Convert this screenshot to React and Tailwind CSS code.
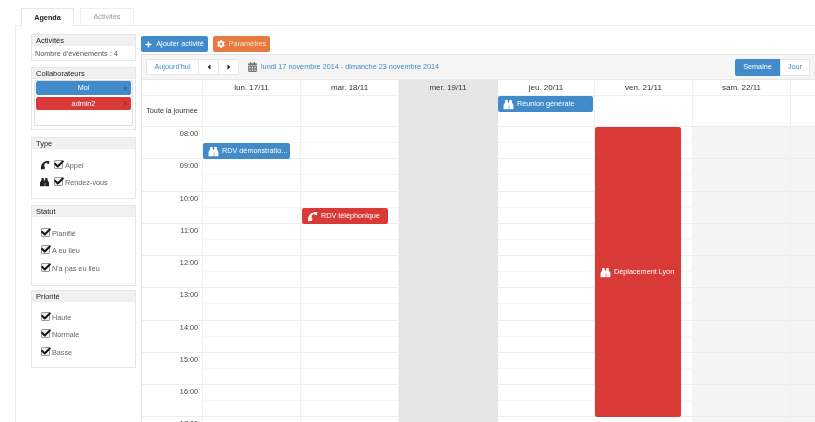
import React from "react";
import { FaPlus, FaCog, FaCalendarAlt, FaTimes, FaCaretLeft, FaCaretRight, FaCheck } from "react-icons/fa";

const Phone = ({ className }) => (
  <svg viewBox="0 0 20 20" className={className} fill="currentColor">
    <path d="M2 18.5C1 11 5 3.500 13 2.200c2.200-.4 4.600-.2 5.800.4l-.6 4.600c-.1.500-.5.700-1 .600l-3.200-1c-.4-.1-.6-.4-.6-.8l.1-1.200c-3.500.7-5.600 4.200-5.300 8l1.200.4c.4.100.600.500.500.900L9 17.800c-.1.500-.5.700-1 .600L2 18.500z" />
  </svg>
);

const Binoculars = ({ className }) => (
  <svg viewBox="0 0 20 20" className={className} fill="currentColor">
    <path d="M4 2h4.500v3H9v2h2V5h.5V2H16v4l3 5v6.500a1 1 0 0 1-1 1h-5.500a1 1 0 0 1-1-1V12h-1v5.500a1 1 0 0 1-1 1H2a1 1 0 0 1-1-1V11l3-5V2z" />
  </svg>
);

const Check = ({ label, icon, wrap }) => (
  <div className={`flex items-center h-[17.300px] ${wrap || ""}`}>
    {icon}
    <span className="relative w-[9px] h-[9px] border border-[#9a9a9a] bg-[#f1f1f1] rounded-[1px] shrink-0">
      <FaCheck className="absolute left-[-1px] top-[-2px] w-[10px] h-[10px] text-[#111]" />
    </span>
    <span className="ml-[2px] text-[#666] mt-[2px]">{label}</span>
  </div>
);

const Card = ({ title, className, children }) => (
  <section className={`border border-[#e6e6e6] ${className || ""}`}>
    <h3 className="h-[11px] leading-[11px] bg-[#f1f1f1] border-b border-[#ececec] pl-[4px] text-[7.500px] text-[#222] font-medium">{title}</h3>
    {children}
  </section>
);

const Event = ({ color, icon, label, className }) => (
  <div className={`absolute z-10 flex items-center rounded-[2px] text-white text-[7.250px] whitespace-nowrap overflow-hidden ${color} ${className}`}>
    {icon === "phone" ? <Phone className="w-[11px] h-[11px] ml-[5px] mr-[3px] shrink-0" /> : <Binoculars className="w-[11px] h-[11px] ml-[5px] mr-[3px] shrink-0" />}
    <span>{label}</span>
  </div>
);

const days = [
  { label: "lun. 17/11", w: "w-[98px]" },
  { label: "mar. 18/11", w: "w-[98px]" },
  { label: "mer. 19/11", w: "w-[99px]", gray: true },
  { label: "jeu. 20/11", w: "w-[97px]" },
  { label: "ven. 21/11", w: "w-[98px]" },
  { label: "sam. 22/11", w: "w-[98px]", off: true },
  { label: "", w: "w-[25px]", off: true },
];
const hours = ["08:00", "09:00", "10:00", "11:00", "12:00", "13:00", "14:00", "15:00", "16:00", "17:00"];

const Column = ({ day, children }) => (
  <div className={`relative shrink-0 border-r ${day.w} ${day.gray ? "bg-[#e6e6e6] border-[#e6e6e6]" : "border-[#f0f0f0]"}`}>
    <div className={`h-[16px] leading-[16px] text-center text-[8px] text-[#333] border-b ${day.gray ? "border-[#e6e6e6]" : "border-[#f0f0f0]"}`}>{day.label}</div>
    <div className={`h-[31px] border-b ${day.gray ? "border-[#e6e6e6]" : "border-[#ededed]"}`} />
    <div className={day.off ? "bg-[#f4f4f4]" : ""}>
      {hours.map((h) => (
        <div key={h} className={`h-[32.250px] border-b ${day.gray ? "border-[#e6e6e6]" : "border-[#ededed]"}`}>
          <div className={`h-[16px] border-b ${day.gray ? "border-[#e6e6e6]" : "border-[#f6f6f6]"}`} />
        </div>
      ))}
    </div>
    {children}
  </div>
);

export default function App() {
  return (
    <div className="relative h-[422px] w-[815px] overflow-hidden bg-white text-[7.250px] leading-none blur-[0.3px]" style={{ fontFamily: '"Liberation Sans", Arial, sans-serif' }}>
      <div className="flex pt-[8px] pl-[21px] gap-[6px] h-[25px]">
        <div className="w-[53px] h-[18px] z-10 bg-white border border-[#e6e6e6] border-b-0 flex items-center justify-center font-bold text-[#222]">Agenda</div>
        <div className="w-[54px] h-[17px] border border-[#eeeeee] border-b-0 flex items-center justify-center text-[#999]">Activités</div>
      </div>
      <div className="ml-[15px] h-[397px] border-l border-t border-[#ececec] flex pl-[15px] pt-[8px]">
        <aside className="w-[105px] mr-[5px] shrink-0 flex flex-col">
          <Card title="Activités" className="h-[27px] mb-[6px]">
            <p className="pl-[3px] pt-[4px] text-[#555]">Nombre d'événements : 4</p>
          </Card>
          <Card title="Collaborateurs" className="h-[63px] mb-[7px]">
            <div className="mx-[2px] mt-[1px] h-[46px] border border-[#dddddd] rounded-[2px]">
              <div className="mx-[1px] h-[14px] rounded-[2px] bg-[#428bca] text-white flex items-center justify-center relative">
                Moi<FaTimes className="absolute right-[3px] w-[5px] h-[5px] text-[#2f6a9e]" />
              </div>
              <div className="mx-[1px] mt-[2px] h-[13px] rounded-[2px] bg-[#d93a37] text-white flex items-center justify-center relative">
                admin2<FaTimes className="absolute right-[3px] w-[5px] h-[5px] text-[#a82b2e]" />
              </div>
            </div>
          </Card>
          <Card title="Type" className="h-[62px] mb-[6px]">
            <div className="pt-[7px]">
              <Check wrap="pl-[8px]" label="Appel" icon={<Phone className="w-[10px] h-[10px] mr-[4px] text-[#222]" />} />
              <Check wrap="pl-[7px]" label="Rendez-vous" icon={<Binoculars className="w-[11px] h-[10px] mr-[4px] text-[#222]" />} />
            </div>
          </Card>
          <Card title="Statut" className="h-[81px] mb-[4px]">
            <div className="pt-[7px] pl-[9px]">
              <Check label="Planifié" />
              <Check label="A eu lieu" />
              <Check label="N'a pas eu lieu" />
            </div>
          </Card>
          <Card title="Priorité" className="h-[78px]">
            <div className="pt-[6px] pl-[9px]">
              <Check label="Haute" />
              <Check label="Normale" />
              <Check label="Basse" />
            </div>
          </Card>
        </aside>
        <main className="flex-1 min-w-0">
          <div className="flex gap-[5px] pt-[2px] h-[20px]">
            <button className="w-[67px] h-[16px] rounded-[2px] bg-[#428bca] text-white flex items-center justify-center gap-[4px]">
              <FaPlus className="w-[7px] h-[7px]" />Ajouter activité
            </button>
            <button className="w-[57px] h-[16px] rounded-[2px] bg-[#e8793f] text-[#fde6d8] flex items-center justify-center gap-[4px]">
              <FaCog className="w-[8px] h-[8px] text-white" />Paramètres
            </button>
          </div>
          <div className="h-[26px] bg-[#f5f5f5] border-y border-[#e6e6e6] border-l flex items-center pl-[4px] pr-[5px]">
            <div className="flex h-[16px] bg-white border border-[#e6e6e6] rounded-[2px] text-[#428bca]">
              <span className="w-[52px] flex items-center justify-center border-r border-[#e6e6e6]">Aujourd'hui</span>
              <span className="w-[20px] flex items-center justify-center border-r border-[#e6e6e6] text-[#222]"><FaCaretLeft className="w-[8px] h-[8px]" /></span>
              <span className="w-[19px] flex items-center justify-center text-[#222]"><FaCaretRight className="w-[8px] h-[8px]" /></span>
            </div>
            <FaCalendarAlt className="ml-[9px] w-[9px] h-[10px] text-[#777]" />
            <span className="ml-[4px] text-[#428bca]">lundi 17 novembre 2014 - dimanche 23 novembre 2014</span>
            <div className="ml-auto flex h-[17px] text-[#428bca]">
              <span className="w-[45px] bg-[#428bca] text-white rounded-l-[2px] flex items-center justify-center">Semaine</span>
              <span className="w-[30px] bg-white border border-[#e6e6e6] flex items-center justify-center">Jour</span>
            </div>
          </div>
          <div className="flex border-l border-[#e6e6e6]">
            <div className="w-[61px] shrink-0 border-r border-[#f0f0f0] text-[#444]">
              <div className="h-[16px] border-b border-[#f0f0f0]" />
              <div className="h-[31px] flex items-center justify-center border-b border-[#ededed] text-[#333] whitespace-nowrap">Toute la journée</div>
              {hours.map((h) => (
                <div key={h} className="h-[32.250px] border-b border-[#ededed] text-right pr-[4px] pt-[3px] text-[#444]">{h}</div>
              ))}
            </div>
            <Column day={days[0]}>
              <Event color="bg-[#428bca]" label="RDV démonstratio..." className="left-0 top-[63px] w-[87px] h-[16px]" />
            </Column>
            <Column day={days[1]}>
              <Event color="bg-[#d93a37]" icon="phone" label="RDV téléphonique" className="left-[1px] top-[128px] w-[86px] h-[16px]" />
            </Column>
            <Column day={days[2]} />
            <Column day={days[3]}>
              <Event color="bg-[#428bca]" label="Réunion générale" className="left-0 top-[16px] w-[95px] h-[16px]" />
            </Column>
            <Column day={days[4]}>
              <Event color="bg-[#d93a37]" label="Déplacement Lyon" className="left-0 top-[47px] w-[86px] h-[290px]" />
            </Column>
            <Column day={days[5]} />
            <Column day={days[6]} />
          </div>
        </main>
      </div>
    </div>
  );
}
